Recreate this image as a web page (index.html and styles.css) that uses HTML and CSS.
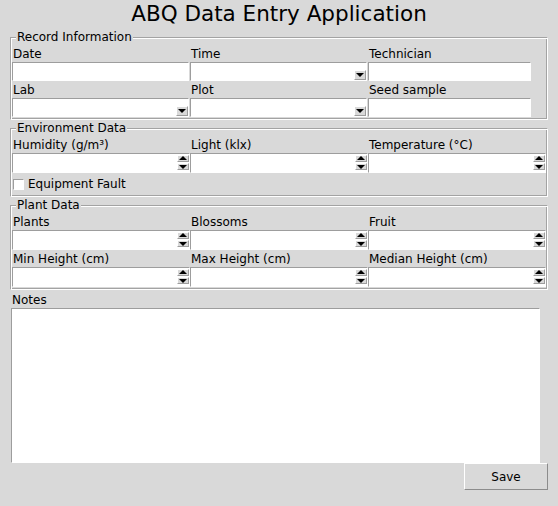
FILE: index.html
```html
<!DOCTYPE html>
<html lang="en">
<head>
<meta charset="utf-8">
<title>ABQ Data Entry Application</title>
<link rel="stylesheet" href="styles.css">
</head>
<body>
<div class="app">
  <h1 class="title">ABQ Data Entry Application</h1>

  <fieldset class="group">
    <legend class="group-label">Record Information</legend>
    <div class="grid">
      <div class="cell"><label class="field-label">Date</label><input class="entry" type="text"></div>
      <div class="cell"><label class="field-label">Time</label><div class="entry combo"><span class="drop"></span></div></div>
      <div class="cell"><label class="field-label">Technician</label><input class="entry entry-short" type="text"></div>
      <div class="cell"><label class="field-label">Lab</label><div class="entry combo"><span class="drop"></span></div></div>
      <div class="cell"><label class="field-label">Plot</label><div class="entry combo"><span class="drop"></span></div></div>
      <div class="cell"><label class="field-label">Seed sample</label><input class="entry entry-short" type="text"></div>
    </div>
  </fieldset>

  <fieldset class="group">
    <legend class="group-label">Environment Data</legend>
    <div class="grid">
      <div class="cell"><label class="field-label">Humidity (g/m³)</label><div class="entry spin"><span class="arrows"><span class="arr up"></span><span class="arr down"></span></span></div></div>
      <div class="cell"><label class="field-label">Light (klx)</label><div class="entry spin"><span class="arrows"><span class="arr up"></span><span class="arr down"></span></span></div></div>
      <div class="cell"><label class="field-label">Temperature (°C)</label><div class="entry spin"><span class="arrows"><span class="arr up"></span><span class="arr down"></span></span></div></div>
    </div>
    <div class="check-row"><span class="checkbox"></span><span>Equipment Fault</span></div>
  </fieldset>

  <fieldset class="group">
    <legend class="group-label">Plant Data</legend>
    <div class="grid">
      <div class="cell"><label class="field-label">Plants</label><div class="entry spin"><span class="arrows"><span class="arr up"></span><span class="arr down"></span></span></div></div>
      <div class="cell"><label class="field-label">Blossoms</label><div class="entry spin"><span class="arrows"><span class="arr up"></span><span class="arr down"></span></span></div></div>
      <div class="cell"><label class="field-label">Fruit</label><div class="entry spin"><span class="arrows"><span class="arr up"></span><span class="arr down"></span></span></div></div>
      <div class="cell"><label class="field-label">Min Height (cm)</label><div class="entry spin"><span class="arrows"><span class="arr up"></span><span class="arr down"></span></span></div></div>
      <div class="cell"><label class="field-label">Max Height (cm)</label><div class="entry spin"><span class="arrows"><span class="arr up"></span><span class="arr down"></span></span></div></div>
      <div class="cell"><label class="field-label">Median Height (cm)</label><div class="entry spin"><span class="arrows"><span class="arr up"></span><span class="arr down"></span></span></div></div>
    </div>
  </fieldset>

  <div class="notes-label">Notes</div>
  <textarea class="notes"></textarea>

  <div class="footer"><button class="save" type="button">Save</button></div>
</div>
</body>
</html>
```

FILE: styles.css
```css
* { box-sizing: border-box; }

html, body {
  margin: 0;
  background: #d9d9d9;
}

body {
  font-family: "DejaVu Sans", "Noto Sans", sans-serif;
  font-size: 12px;
  color: #000;
  width: 558px;
  height: 506px;
  overflow: hidden;
}

.app {
  padding: 0 10px;
}

.title {
  margin: 0;
  font-weight: normal;
  font-size: 21.5px;
  height: 29px;
  line-height: 28px;
  text-align: center;
}

.group {
  margin: 0;
  padding: 0 0 2px 1px;
  min-width: 0;
  border: 1px solid;
  border-color: #a3a3a3 #ffffff #ffffff #a3a3a3;
  box-shadow: inset 1px 1px 0 #ffffff, inset -1px -1px 0 #a3a3a3;
}

.group-label {
  margin-left: 4px;
  padding: 0 1px;
  height: 16px;
  line-height: 16px;
  background: #d9d9d9;
}

.grid {
  display: grid;
  grid-template-columns: 178px 178px 178px;
}

.field-label {
  display: block;
  height: 17px;
  line-height: 15px;
  padding: 2px 0 0 1px;
  white-space: nowrap;
}

.entry {
  display: block;
  position: relative;
  width: 177px;
  height: 19px;
  margin: 0;
  padding: 0 2px;
  font: inherit;
  background: #ffffff;
  border: 1px solid;
  border-color: #9d9d9d #ffffff #ffffff #9d9d9d;
  outline: none;
}

.entry-short {
  width: 163px;
}

.spin {
  width: 178px;
  height: 20px;
}

.drop {
  position: absolute;
  right: 0;
  bottom: 0;
  width: 12px;
  height: 10px;
  background: #d9d9d9;
  border: 1px solid;
  border-color: #ffffff #9d9d9d #9d9d9d #ffffff;
}

.drop::after {
  content: "";
  position: absolute;
  left: 1px;
  top: 2px;
  border-top: 4px solid #000;
  border-left: 4px solid transparent;
  border-right: 4px solid transparent;
}

.arrows {
  position: absolute;
  right: 0;
  top: 1px;
  display: flex;
  flex-direction: column;
  gap: 1px;
}

.arr {
  position: relative;
  display: block;
  width: 12px;
  height: 7px;
  background: #d9d9d9;
  border: 1px solid;
  border-color: #ffffff #9d9d9d #9d9d9d #ffffff;
}

.arr::after {
  content: "";
  position: absolute;
  left: 1px;
  border-left: 4px solid transparent;
  border-right: 4px solid transparent;
}

.up::after {
  top: 0;
  border-bottom: 4px solid #000;
}

.down::after {
  top: 1px;
  border-top: 4px solid #000;
}

.check-row {
  display: flex;
  align-items: center;
  height: 21px;
  padding: 1px 0 0 1px;
}

.checkbox {
  width: 11px;
  height: 11px;
  margin-right: 4px;
  background: #ffffff;
  border: 1px solid;
  border-color: #9d9d9d #ffffff #ffffff #9d9d9d;
}

.notes-label {
  height: 18px;
  line-height: 16px;
  padding: 2px 0 0 2px;
}

.notes {
  display: block;
  width: 529px;
  height: 155px;
  margin: 0 0 0 1px;
  padding: 2px;
  font: inherit;
  resize: none;
  background: #ffffff;
  border: 1px solid;
  border-color: #9d9d9d #ffffff #ffffff #9d9d9d;
  outline: none;
}

.footer {
  display: flex;
  justify-content: flex-end;
}

.save {
  width: 84px;
  height: 27px;
  margin: 0;
  padding: 0;
  font: inherit;
  color: #000;
  background: #d9d9d9;
  border: 1px solid;
  border-color: #ffffff #8c8c8c #8c8c8c #ffffff;
  border-radius: 0;
}
```
